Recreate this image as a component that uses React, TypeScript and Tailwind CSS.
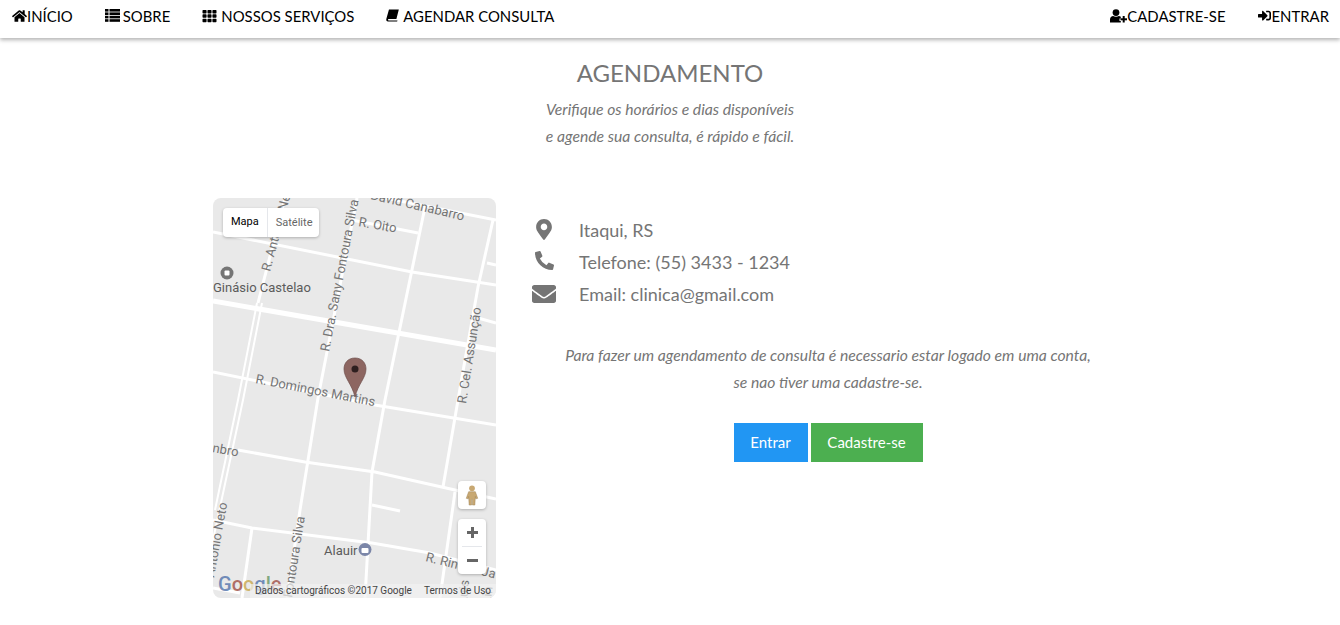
import { FaEnvelope, FaHome, FaMapMarkerAlt, FaPhoneAlt, FaSignInAlt, FaTh } from "react-icons/fa";

const roads = [
    { d: "M213 232 L412 272 L496 285", w: 3 },
    { d: "M213 301 L496 350", w: 5 },
    { d: "M213 372 L375 405 L496 425", w: 3 },
    { d: "M385 198 L496 220", w: 3 },
    { d: "M352 220 L418 233", w: 3 },
    { d: "M425 207 L385 400 L372 472 L365 598", w: 3 },
    { d: "M357 198 L318 398 L300 510 L287 598", w: 3 },
    { d: "M493 220 L478 287 L462 377 L443 487", w: 3 },
    { d: "M455 492 L440 598", w: 3 },
    { d: "M285 198 L258 303", w: 3 },
    { d: "M257 303 L238 400 L215 510", w: 2 },
    { d: "M262 303 L243 400 L219 512 L213 540", w: 2 },
    { d: "M238 450 L305 462 L375 472 L455 490 L496 499", w: 3 },
    { d: "M213 520 L252 528 L372 543 L430 553 L496 570", w: 3 },
    { d: "M372 505 L400 511", w: 3 },
    { d: "M252 528 L242 598", w: 3 },
    { d: "M487 263 L496 265", w: 3 },
    { d: "M478 318 L496 323", w: 3 },
    { d: "M213 588 L240 593", w: 3 },
];

// rotated street names, placed by hand against the map
const labels = [
    { text: "R. Oito", x: 358, y: 226, r: 10 },
    { text: "David Canabarro", x: 370, y: 199, r: 13 },
    { text: "R. Antonio Neto", x: 270, y: 272, r: -75 },
    { text: "R. Dra. Sany Fontoura Silva", x: 329, y: 352, r: -79 },
    { text: "R. Cel. Assunção", x: 466, y: 404, r: -81 },
    { text: "R. Domingos Martins", x: 255, y: 383, r: 11 },
    { text: "nbro", x: 212, y: 452, r: 10 },
    { text: "Fontoura Silva", x: 292, y: 598, r: -81 },
    { text: "Antonio Neto", x: 214, y: 578, r: -80 },
    { text: "R. Rincão Ja", x: 425, y: 561, r: 14 },
    { text: "Luis", x: 467, y: 604, r: -85 },
    { text: "Lin", x: 491, y: 604, r: -85 },
];

function MapPicture() {
    return (
        <svg viewBox="213 198 283 400" className="block h-full w-full" style={{ fontFamily: "Roboto, sans-serif" }}>
            <rect x="213" y="198" width="283" height="400" fill="#e9e9e9" />
            {roads.map((r) => (
                <path key={r.d} d={r.d} fill="none" stroke="#ffffff" strokeWidth={r.w} />
            ))}
            {labels.map((l) => (
                <text key={l.text} x={l.x} y={l.y} fontSize="13" fill="#757575" transform={`rotate(${l.r} ${l.x} ${l.y})`}>
                    {l.text}
                </text>
            ))}
            <circle cx="227" cy="273" r="6.5" fill="#757575" />
            <rect x="224.5" y="270.5" width="5" height="5" rx="1" fill="#ffffff" />
            <text x="213" y="292" fontSize="13" fill="#5b5b5b">Ginásio Castelao</text>
            <text x="324" y="555" fontSize="13" fill="#5b5b5b">Alauir</text>
            <circle cx="365" cy="549.5" r="6.5" fill="#7b86a8" />
            <rect x="361.5" y="548" width="7" height="5" rx="1" fill="#ffffff" />
            <path d="M355 358 C347.5 358 344 363.5 344 369 C344 378 352 384 355 397 C358 384 366 378 366 369 C366 363.5 362.5 358 355 358 Z" fill="#8d6661" stroke="#6e4f4c" strokeWidth="0.7" />
            <circle cx="355" cy="369" r="3.5" fill="#2e1f1f" />
            <text x="218" y="591" fontSize="20" fontWeight="500" opacity="0.85">
                <tspan fill="#5b7bb0">G</tspan>
                <tspan fill="#a5584f">o</tspan>
                <tspan fill="#c9ac57">o</tspan>
                <tspan fill="#5b7bb0">g</tspan>
                <tspan fill="#6f9e6f">l</tspan>
                <tspan fill="#a5584f">e</tspan>
            </text>
            <rect x="250" y="584" width="246" height="14" fill="#f1f1f1" fillOpacity="0.7" />
            <text x="255" y="594" fontSize="10" fill="#444444">Dados cartográficos ©2017 Google</text>
            <text x="424" y="594" fontSize="10" fill="#444444">Termos de Uso</text>
        </svg>
    );
}

function Pegman() {
    return (
        <svg viewBox="0 0 14 22" className="h-[21px] w-[14px]">
            <circle cx="7" cy="3.5" r="3" fill="#c8a872" />
            <path d="M3.5 7 H10.5 L13 14 L11 14.5 L10.5 12 L10 21 H7.5 V15 H6.5 V21 H4 L3.5 12 L3 14.5 L1 14 Z" fill="#c8a872" stroke="#9c8152" strokeWidth="0.5" />
        </svg>
    );
}

function ListIcon() {
    return (
        <svg viewBox="0 0 15 13" className="mr-[3px] h-[13px] w-[15px]" fill="currentColor">
            {[0, 3.4, 6.8, 10.2].map((y) => (
                <g key={y}>
                    <rect x="0" y={y} width="3.5" height="2.6" />
                    <rect x="4.5" y={y} width="10.5" height="2.6" />
                </g>
            ))}
        </svg>
    );
}

function BookIcon() {
    return (
        <svg viewBox="0 0 14 14" className="mr-[4px] h-[13px] w-[13px]" fill="currentColor">
            <path d="M3.2 0.5 H13.8 L11.2 10.8 H3 C1.8 10.8 1.8 12.4 3 12.4 H12.4 L12 13.5 H2.2 C0.5 13.5 0 12 0.4 10.5 Z" />
        </svg>
    );
}

function UserPlusIcon() {
    return (
        <svg viewBox="0 0 17 14" className="h-[14px] w-[17px]" fill="currentColor">
            <circle cx="6" cy="3.6" r="3.4" />
            <path d="M0 13.5 V10.5 C0 8.2 1.5 7 3.2 7 C4.5 8 7.5 8 8.8 7 C9.5 7 10.2 7.2 10.8 7.7 V9.5 H9.5 V12 H10.8 V13.5 Z" />
            <rect x="10.5" y="9.3" width="6.5" height="2" />
            <rect x="12.7" y="7" width="2" height="6.5" />
        </svg>
    );
}

function NavItem({ icon, label }: { icon: React.ReactNode; label: string }) {
    return (
        <a className="flex items-center text-[14.9px] text-black">
            {icon}
            <span>{label}</span>
        </a>
    );
}

export default function App() {
    return (
        <div className="min-h-[625px] bg-white" style={{ fontFamily: "Lato, sans-serif" }}>
            <nav className="flex h-[38px] items-center justify-between bg-white pb-[6px] pl-3 pr-[11px] shadow-[0_2px_4px_rgba(0,0,0,0.3)]">
                <div className="flex items-center gap-8">
                    <NavItem icon={<FaHome className="h-[14px] w-[15px]" />} label="INÍCIO" />
                    <NavItem icon={<ListIcon />} label="SOBRE" />
                    <NavItem icon={<FaTh className="mr-[4px] h-[14px] w-[15px]" />} label="NOSSOS SERVIÇOS" />
                    <NavItem icon={<BookIcon />} label="AGENDAR CONSULTA" />
                </div>
                <div className="flex items-center gap-[33px]">
                    <NavItem icon={<UserPlusIcon />} label="CADASTRE-SE" />
                    <NavItem icon={<FaSignInAlt className="h-[13px] w-[13px]" />} label="ENTRAR" />
                </div>
            </nav>

            <header className="pt-5 text-center text-[#757575]">
                <h1 className="text-2xl leading-[30px]">AGENDAMENTO</h1>
                <p className="mt-2 text-[15.7px] italic leading-[27px]">Verifique os horários e dias disponíveis</p>
                <p className="text-[15.7px] italic leading-[27px]">e agende sua consulta, é rápido e fácil.</p>
            </header>

            <main className="ml-[213px] mt-12 flex">
                <div className="relative h-[400px] w-[283px] overflow-hidden rounded-lg">
                    <MapPicture />
                    <div className="absolute left-[10px] top-[10px] flex h-[29px] items-center rounded-sm bg-white text-[11px] shadow-[0_1px_3px_rgba(0,0,0,0.25)]" style={{ fontFamily: "Roboto, sans-serif" }}>
                        <span className="px-2 text-black">Mapa</span>
                        <span className="border-l border-gray-200 pl-2 pr-[7px] leading-[29px] text-[#666666]">Satélite</span>
                    </div>
                    <div className="absolute right-[10px] top-[283px] flex h-7 w-7 items-center justify-center rounded-sm bg-white shadow-[0_1px_3px_rgba(0,0,0,0.25)]">
                        <Pegman />
                    </div>
                    <div className="absolute right-[10px] top-[321px] flex h-[55px] w-7 flex-col items-center rounded-sm bg-white shadow-[0_1px_3px_rgba(0,0,0,0.25)]">
                        <div className="flex h-[27px] w-full items-center justify-center">
                            <div className="relative h-[11px] w-[11px]">
                                <span className="absolute left-0 top-[4px] h-[3px] w-[11px] bg-[#666666]" />
                                <span className="absolute left-[4px] top-0 h-[11px] w-[3px] bg-[#666666]" />
                            </div>
                        </div>
                        <div className="h-px w-5 bg-gray-200" />
                        <div className="flex h-[27px] w-full items-center justify-center">
                            <span className="h-[3px] w-[11px] bg-[#666666]" />
                        </div>
                    </div>
                </div>

                <section className="w-[664px] text-[#757575]">
                    <ul className="pt-4 text-lg leading-8">
                        <li className="flex h-8 items-center">
                            <span className="flex w-[83px] justify-center pl-[13px]"><FaMapMarkerAlt className="h-[21px] w-[16px] -translate-y-[1px]" /></span>
                            Itaqui, RS
                        </li>
                        <li className="flex h-8 items-center">
                            <span className="flex w-[83px] justify-center pl-[13px]"><FaPhoneAlt className="h-[19px] w-[19px] -translate-y-[2px]" /></span>
                            Telefone: (55) 3433 - 1234
                        </li>
                        <li className="flex h-8 items-center">
                            <span className="flex w-[83px] justify-center pl-[13px]"><FaEnvelope className="h-[24px] w-[24px]" /></span>
                            Email: clinica@gmail.com
                        </li>
                    </ul>
                    <div className="mt-8 text-center text-[15.7px] italic leading-[27px]">
                        <p>Para fazer um agendamento de consulta é necessario estar logado em uma conta,</p>
                        <p>se nao tiver uma cadastre-se.</p>
                    </div>
                    <div className="mt-[27px] flex justify-center gap-[3px] text-[15px] text-white">
                        <button className="h-[39px] w-[74px] bg-[#2196f3]">Entrar</button>
                        <button className="h-[39px] w-[112px] bg-[#4caf50]">Cadastre-se</button>
                    </div>
                </section>
            </main>
        </div>
    );
}
